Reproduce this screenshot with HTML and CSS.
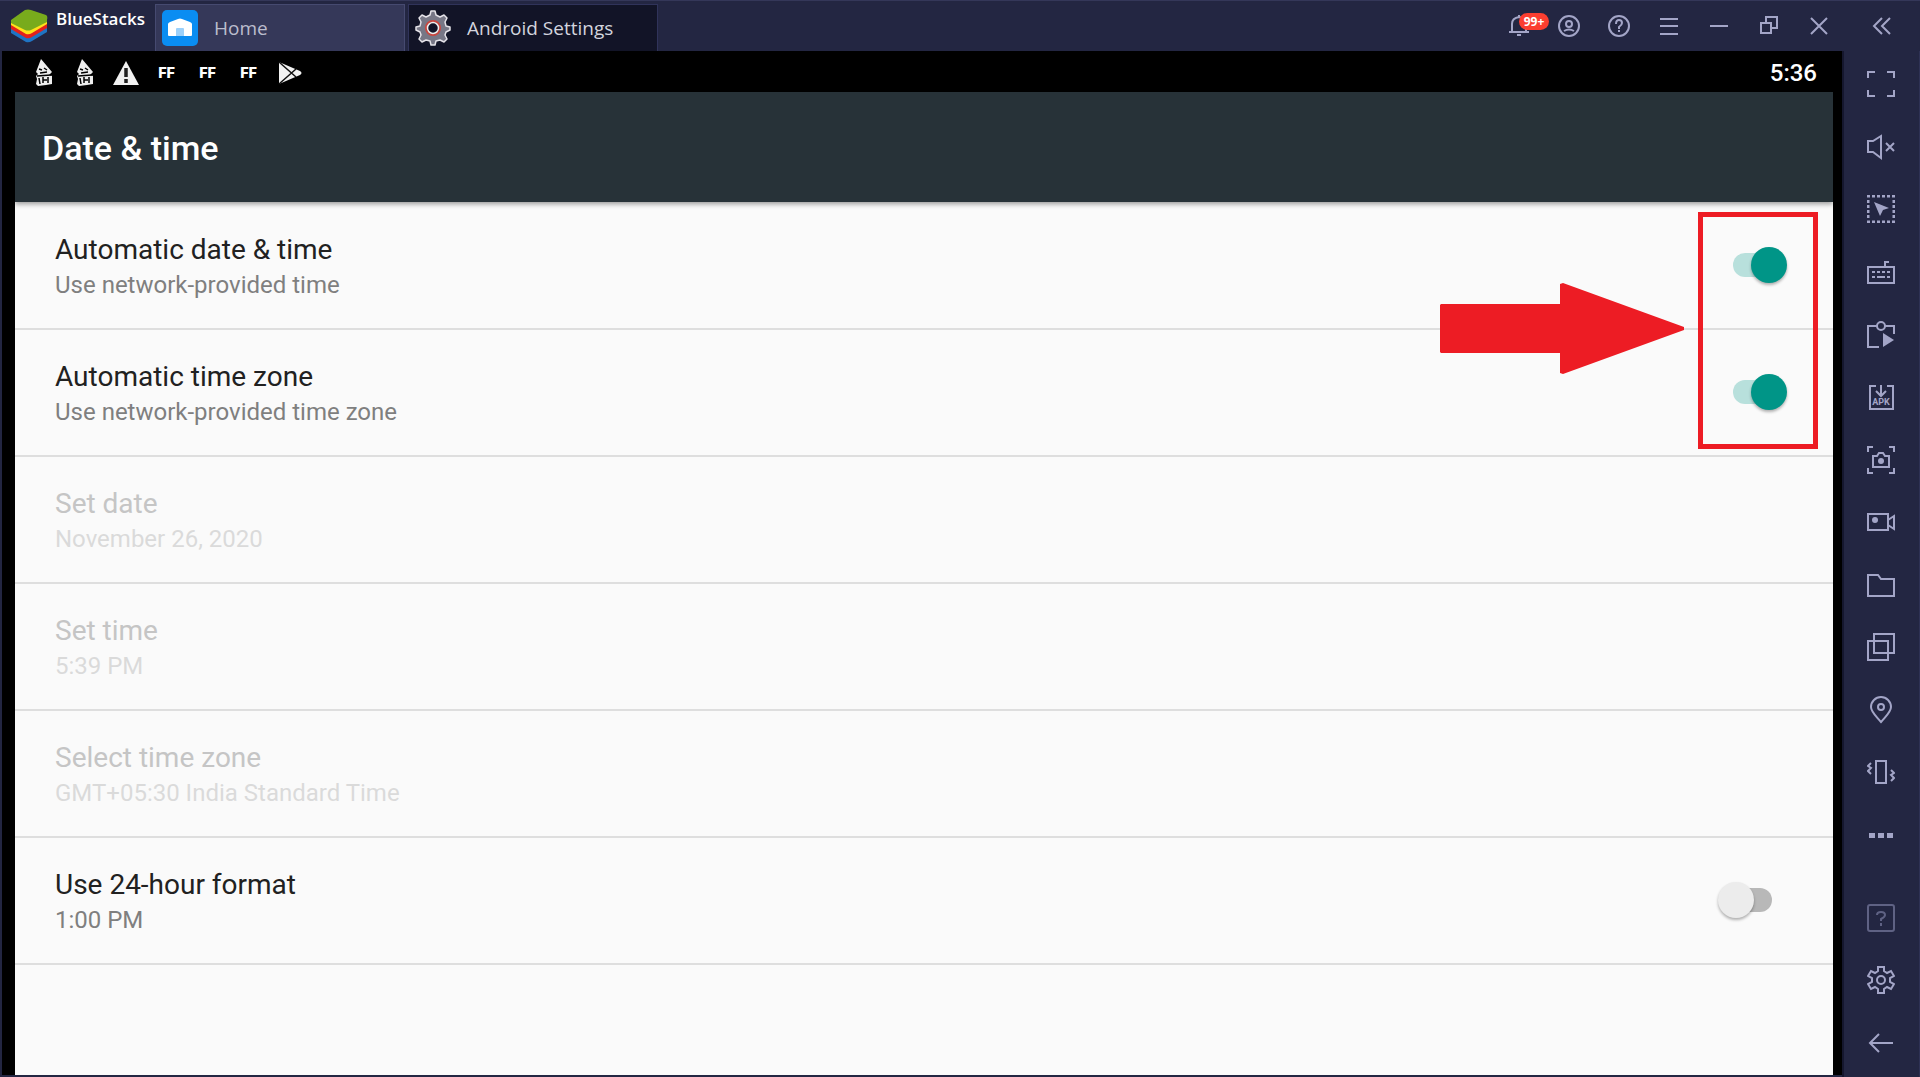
FILE: index.html
```html
<!DOCTYPE html>
<html lang="en">
<head>
<meta charset="utf-8">
<title>BlueStacks - Android Settings</title>
<meta name="viewport" content="width=device-width, initial-scale=1">
<link rel="stylesheet" href="styles.css">
</head>
<body>
<header class="topbar">
  <div class="brand">
    <svg class="brand-logo" viewBox="0 0 38 34" aria-hidden="true">
      <path d="M1 19v5l15 9q3 1 6-1l15-9v-5z" fill="#1f74c4"/>
      <path d="M1 15v5l15 9q3 1 6-1l15-9v-5z" fill="#e2211c"/>
      <path d="M1 11v5l15 9q3 1 6-1l15-9v-5z" fill="#ffe11a"/>
      <path d="M1 11 15 1q3-1 6 0l15 5q2 1 1 5v2l-16 8q-3 1-6 0L1 14z" fill="#78ab1c"/>
    </svg>
    <span class="brand-name">BlueStacks</span>
  </div>
  <nav class="tabs" aria-label="Open apps">
    <a class="tab" href="#home">
      <svg class="tab-icon" viewBox="0 0 36 36" aria-hidden="true">
        <rect width="36" height="36" rx="5" fill="#0a8df2"/>
        <path d="M6 14q0-1 2-2l8-3q2-1 4 0l8 3q2 1 2 2v11q0 1-1 1H7q-1 0-1-1z" fill="#fff"/>
        <path d="M14 26v-7q0-1 1-1h6q1 0 1 1v7z" fill="#9bd0fa"/>
      </svg>
      <span>Home</span>
    </a>
    <a class="tab tab-active" href="#settings" aria-current="page">
      <svg class="tab-icon" viewBox="0 0 36 36" aria-hidden="true">
        <g fill="#777786" stroke="#e4e2e8" stroke-width="1.5" stroke-linejoin="round">
          <path d="M15 5l1-4h4l1 4 4 2 4-2 3 3-2 4 1 4 4 1v3l-4 2-1 3 2 4-3 3-4-2-4 1-1 4h-4l-1-4-4-1-4 2-3-3 2-4-1-3-4-2v-3l4-1 1-4-2-4 3-3 4 2z"/>
        </g>
        <circle cx="18" cy="18" r="7" fill="#121427" stroke="#c9463f" stroke-width="2"/>
        <circle cx="18" cy="18" r="5.500" fill="#121427" stroke="#eee" stroke-width="1.500"/>
      </svg>
      <span>Android Settings</span>
    </a>
  </nav>
  <div class="window-controls">
    <button class="control" aria-label="Notifications">
      <svg class="icon" viewBox="0 0 28 28"><path d="M4 20h20M7 20v-8q0-6 7-7 7 1 7 7v8M14 3v3M12 23h4"/></svg>
      <span class="badge">99+</span>
    </button>
    <button class="control" aria-label="Account">
      <svg class="icon" viewBox="0 0 28 28"><circle cx="14" cy="14" r="10"/><circle cx="14" cy="12" r="3"/><path d="M9 19q5-3 10 0"/></svg>
    </button>
    <button class="control" aria-label="Help">
      <svg class="icon" viewBox="0 0 28 28"><circle cx="14" cy="14" r="10"/><path d="M11 12q0-4 3-4t3 3q0 2-3 4v2M14 18v2"/></svg>
    </button>
    <button class="control" aria-label="Menu">
      <svg class="icon" viewBox="0 0 28 28"><path d="M5 7h18M5 14h18M5 22h18"/></svg>
    </button>
    <button class="control" aria-label="Minimize">
      <svg class="icon" viewBox="0 0 28 28"><path d="M5 14h18"/></svg>
    </button>
    <button class="control" aria-label="Restore">
      <svg class="icon" viewBox="0 0 28 28"><path d="M6 11h10v10H6zM11 11V5h11v11h-6"/></svg>
    </button>
    <button class="control" aria-label="Close">
      <svg class="icon" viewBox="0 0 28 28"><path d="M6 6l16 16M22 6L6 22"/></svg>
    </button>
    <button class="control control-collapse" aria-label="Collapse sidebar">
      <svg class="icon" viewBox="0 0 28 28"><path d="M14 6l-8 8 8 8M22 6l-8 8 8 8"/></svg>
    </button>
  </div>
</header>

<div class="workspace">
  <div class="device">
    <div class="statusbar">
      <div class="status-icons">
        <span class="status-cell"><svg class="status-icon" viewBox="2 0 26 28"><path d="M12 0l11 13-3 3 3 1v8l-6 1-8 1-2-2 1-5-1-3 2-2-2-2z" fill="#eee"/><path d="M10 10l3 1M15 9l3 2M11 14l7-1M8 17l14-1M10 19l1 6M14 18v6M14 21h4M19 18v6" stroke="#000" stroke-width="1.500"/></svg></span>
        <span class="status-cell"><svg class="status-icon" viewBox="2 0 26 28"><path d="M12 0l11 13-3 3 3 1v8l-6 1-8 1-2-2 1-5-1-3 2-2-2-2z" fill="#eee"/><path d="M10 10l3 1M15 9l3 2M11 14l7-1M8 17l14-1M10 19l1 6M14 18v6M14 21h4M19 18v6" stroke="#000" stroke-width="1.500"/></svg></span>
        <span class="status-cell"><svg class="status-icon" viewBox="0 0 26 28"><path d="M13 2l13 24H0z" fill="#f2f2f2"/><path d="M13 9v9M13 20v4" stroke="#222" stroke-width="3.500"/></svg></span>
        <span class="status-cell">FF</span>
        <span class="status-cell">FF</span>
        <span class="status-cell">FF</span>
        <span class="status-cell"><svg class="status-icon" viewBox="1 0 26 28"><path d="M3 3l21 9q3 2 0 4L3 25z" fill="#f2f2f2"/><path d="M3 3l17 15M3 25l17-15" stroke="#111" stroke-width="1.500"/></svg></span>
      </div>
      <time class="clock">5:36</time>
    </div>
    <main class="screen">
      <div class="appbar"><h1 class="page-title">Date &amp; time</h1></div>
      <div class="settings">
        <label class="row">
          <span class="row-text"><span class="row-title">Automatic date &amp; time</span><span class="row-summary">Use network-provided time</span></span>
          <input class="switch" type="checkbox" role="switch" checked>
        </label>
        <label class="row">
          <span class="row-text"><span class="row-title">Automatic time zone</span><span class="row-summary">Use network-provided time zone</span></span>
          <input class="switch" type="checkbox" role="switch" checked>
        </label>
        <button class="row" disabled>
          <span class="row-text"><span class="row-title">Set date</span><span class="row-summary">November 26, 2020</span></span>
        </button>
        <button class="row" disabled>
          <span class="row-text"><span class="row-title">Set time</span><span class="row-summary">5:39 PM</span></span>
        </button>
        <button class="row" disabled>
          <span class="row-text"><span class="row-title">Select time zone</span><span class="row-summary">GMT+05:30 India Standard Time</span></span>
        </button>
        <label class="row">
          <span class="row-text"><span class="row-title">Use 24-hour format</span><span class="row-summary">1:00 PM</span></span>
          <input class="switch" type="checkbox" role="switch">
        </label>
        <svg class="callout-arrow" viewBox="0 0 245 91" aria-hidden="true"><path d="M1 21h119V1l3-1 121 44v3L123 91l-3-1V70H1l-1-1V22z" fill="#ed1c24"/></svg>
        <div class="callout-box"></div>
      </div>
    </main>
  </div>

  <aside class="sidebar" aria-label="Tools">
    <button class="tool" aria-label="Full screen"><svg class="icon" viewBox="0 0 28 28"><path d="M1 8V2h7M20 2h7v6M1 20v6h7M20 26h7v-6"/></svg></button>
    <button class="tool" aria-label="Mute"><svg class="icon" viewBox="0 0 28 28"><path d="M1 8h5l8-5v22l-8-6H1zM19 10l8 8M27 10l-8 8"/></svg></button>
    <button class="tool" aria-label="Lock cursor"><svg class="icon" viewBox="0 0 28 28"><path d="M0 1h28M0 27h28M1 5v20M27 5v20" stroke-width="3" stroke-dasharray="3 2"/><path class="solid" d="M7 7l15 6-6 2-3 6z"/></svg></button>
    <button class="tool" aria-label="Keyboard controls"><svg class="icon" viewBox="0 0 28 28"><path d="M1 9h26v16H1zM18 9V4h4"/><path d="M5 14h18M5 19h3M11 19h7M20 19h3" stroke-dasharray="3 2"/><path d="M10 19h8"/></svg></button>
    <button class="tool" aria-label="Macro recorder"><svg class="icon" viewBox="0 0 28 28"><path d="M10 5H1v21h11M18 5h9v8"/><circle cx="14" cy="5" r="4"/><path class="solid" d="M16 12l11 7-11 7z"/></svg></button>
    <button class="tool" aria-label="Install APK"><svg class="icon" viewBox="0 0 28 28"><path d="M9 3H3v23h23V3h-6M14 2v10M9 8l5 5 5-5"/><text class="apk" x="14" y="22" text-anchor="middle">APK</text></svg></button>
    <button class="tool" aria-label="Screenshot"><svg class="icon" viewBox="0 0 28 28"><path d="M1 6V1h5M22 1h5v5M1 22v5h5M22 27h5v-5M6 10h4l2-3h4l2 3h4v11H6z"/><circle class="solid" cx="14" cy="15" r="3"/></svg></button>
    <button class="tool" aria-label="Record screen"><svg class="icon" viewBox="0 0 28 28"><path d="M1 6h20v16H1zM21 12l6-4v13l-6-4"/><circle class="solid" cx="8" cy="12" r="3"/></svg></button>
    <button class="tool" aria-label="Media folder"><svg class="icon" viewBox="0 0 28 28"><path d="M1 4h10l3 4h13v17H1z"/></svg></button>
    <button class="tool" aria-label="Multi-instance"><svg class="icon" viewBox="0 0 28 28"><path d="M7 1h20v19H7zM1 8h20v19H1z"/></svg></button>
    <button class="tool" aria-label="Location"><svg class="icon" viewBox="0 0 28 28"><path d="M14 26C9 20 4 16 4 11a10 10 0 0 1 20 0c0 5-5 9-10 15z"/><circle cx="14" cy="11" r="3"/></svg></button>
    <button class="tool" aria-label="Shake"><svg class="icon" viewBox="0 0 28 28"><path d="M9 3h10v22H9z"/><path d="M4 5L1 8l3 2-3 3 3 3M24 12l3 3-3 2 3 3-3 3"/></svg></button>
    <button class="tool" aria-label="More"><svg class="icon" viewBox="0 0 28 28"><path class="solid" d="M2 12h6v5H2zM11 12h6v5h-6zM20 12h6v5h-6z"/></svg></button>
    <div class="tool-gap"></div>
    <button class="tool tool-dim" aria-label="Tips"><svg class="icon" viewBox="0 0 28 28"><rect x="1" y="1" width="26" height="26" rx="2"/><path d="M10 11q0-3 4-3t4 3q0 2-4 4v2M14 19v3"/></svg></button>
    <button class="tool" aria-label="Settings"><svg class="icon" viewBox="0 0 28 28"><path d="M11 5V1h6v4l3 2 4-2 3 5-4 2v4l4 2-3 5-4-2-3 2v4h-6v-4l-3-2-4 2-3-5 4-2v-4l-4-2 3-5 4 2z"/><circle cx="14" cy="14" r="4"/></svg></button>
    <button class="tool" aria-label="Back"><svg class="icon" viewBox="0 0 28 28"><path d="M26 14H3M12 5l-9 9 9 9"/></svg></button>
  </aside>
</div>
</body>
</html>
```
FILE: styles.css
```css
*, *::before, *::after { box-sizing: border-box; }

body {
  margin: 0;
  min-height: 100vh;
  display: flex;
  flex-direction: column;
  background: #232642;
  font-family: Roboto, "Liberation Sans", sans-serif;
}

button {
  margin: 0;
  padding: 0;
  border: 0;
  background: none;
  font: inherit;
  color: inherit;
}

.icon {
  width: 28px;
  height: 28px;
  fill: none;
  stroke: currentColor;
  stroke-width: 2;
  display: block;
}
.icon .solid { fill: currentColor; stroke: none; }
.apk {
  fill: currentColor;
  stroke: none;
  font-size: 9px;
  font-weight: 700;
}

/* Window title bar */
.topbar {
  height: 51px;
  display: flex;
  border-top: 1px solid #343759;
  color: #a3a5c7;
  font-family: "Open Sans", "Noto Sans", sans-serif;
}
.brand {
  width: 155px;
  padding: 8px 0 0 10px;
  display: flex;
  gap: 8px;
}
.brand-logo { width: 38px; height: 34px; }
.brand-name {
  color: #fff;
  font-size: 17px;
  font-weight: 600;
  line-height: 20px;
}
.tabs { display: flex; gap: 3px; padding-top: 3px; }
.tab {
  width: 250px;
  display: flex;
  align-items: center;
  gap: 16px;
  padding-left: 6px;
  background: #353859;
  border: 1px solid #464a70;
  border-bottom: 0;
  color: #bcbdcd;
  font-size: 19px;
  text-decoration: none;
}
.tab-active { background: #121427; border-color: #30335a; color: #d3d4de; }
.tab-icon { width: 36px; height: 36px; }
.window-controls { margin-left: auto; display: flex; }
.control {
  position: relative;
  width: 50px;
  display: grid;
  place-items: center;
}
.control-collapse { width: 76px; }
.badge {
  position: absolute;
  left: 25px;
  top: 12px;
  width: 30px;
  height: 17px;
  border-radius: 9px;
  background: #fb3e30;
  color: #fff;
  font-size: 12px;
  font-weight: 700;
  line-height: 17px;
}

/* Emulated device */
.workspace { flex: 1; display: flex; }
.device {
  flex: 1;
  display: flex;
  flex-direction: column;
  margin: 0 0 2px 2px;
  padding: 0 9px 0 13px;
  background: #000;
}
.statusbar {
  height: 41px;
  display: flex;
  align-items: center;
  justify-content: space-between;
  padding: 2px 16px 0 8px;
  color: #fff;
}
.status-icons { display: flex; }
.status-cell {
  width: 41px;
  display: grid;
  place-items: center;
  font-size: 15px;
  font-weight: 900;
}
.status-icon { width: 26px; height: 28px; }
.clock { font-size: 24px; font-weight: 500; line-height: 28px; }
.screen {
  flex: 1;
  display: flex;
  flex-direction: column;
  background: #fafafa;
}
.appbar {
  position: relative;
  z-index: 1;
  height: 110px;
  display: flex;
  align-items: center;
  padding: 2px 0 0 27px;
  background: #273238;
  box-shadow: 0 2px 5px rgba(0, 0, 0, 0.4);
}
.page-title { margin: 0; color: #fff; font-size: 34px; font-weight: 500; }

.settings {
  position: relative;
  display: flex;
  flex-direction: column;
  padding-top: 1px;
}
.row {
  height: 127px;
  display: flex;
  align-items: center;
  justify-content: space-between;
  padding: 3px 46px 0 40px;
  border-bottom: 2px solid #dedede;
  color: #212121;
  text-align: left;
}
.row-text { display: flex; flex-direction: column; }
.row-title { font-size: 28px; line-height: 36px; }
.row-summary { font-size: 24px; line-height: 34px; color: #7f7f7f; }
.row:disabled .row-title { color: #c5c5c5; }
.row:disabled .row-summary { color: #dadada; }

.switch {
  appearance: none;
  position: relative;
  width: 69px;
  height: 36px;
  margin: 0 0 5px;
}
.switch::before {
  content: "";
  position: absolute;
  left: 15px;
  top: 6px;
  width: 39px;
  height: 24px;
  border-radius: 12px;
  background: #b8b8b8;
}
.switch::after {
  content: "";
  position: absolute;
  left: 0;
  top: 0;
  width: 36px;
  height: 36px;
  border-radius: 50%;
  background: #ececec;
  box-shadow: 0 2px 3px rgba(0, 0, 0, 0.3);
}
.switch:checked::before { background: #b8e0dc; }
.switch:checked::after { left: auto; right: 0; background: #009587; }

/* Highlight drawn over the two automatic switches */
.callout-box {
  position: absolute;
  top: 10px;
  right: 15px;
  width: 120px;
  height: 237px;
  border: 5px solid #ed1c24;
  pointer-events: none;
}
.callout-arrow {
  position: absolute;
  top: 81px;
  right: 148px;
  width: 245px;
  height: 91px;
  pointer-events: none;
}

/* Tool rail */
.sidebar {
  width: 78px;
  display: flex;
  flex-direction: column;
  padding: 2px 1px 3px 0;
  border-left: 2px solid #15172e;
  border-right: 1px solid #2e3154;
  color: #a3a5c7;
}
.tool { flex: 1; display: grid; place-items: center; }
.tool-gap { height: 20px; }
.tool-dim { color: #5f6284; }
```
